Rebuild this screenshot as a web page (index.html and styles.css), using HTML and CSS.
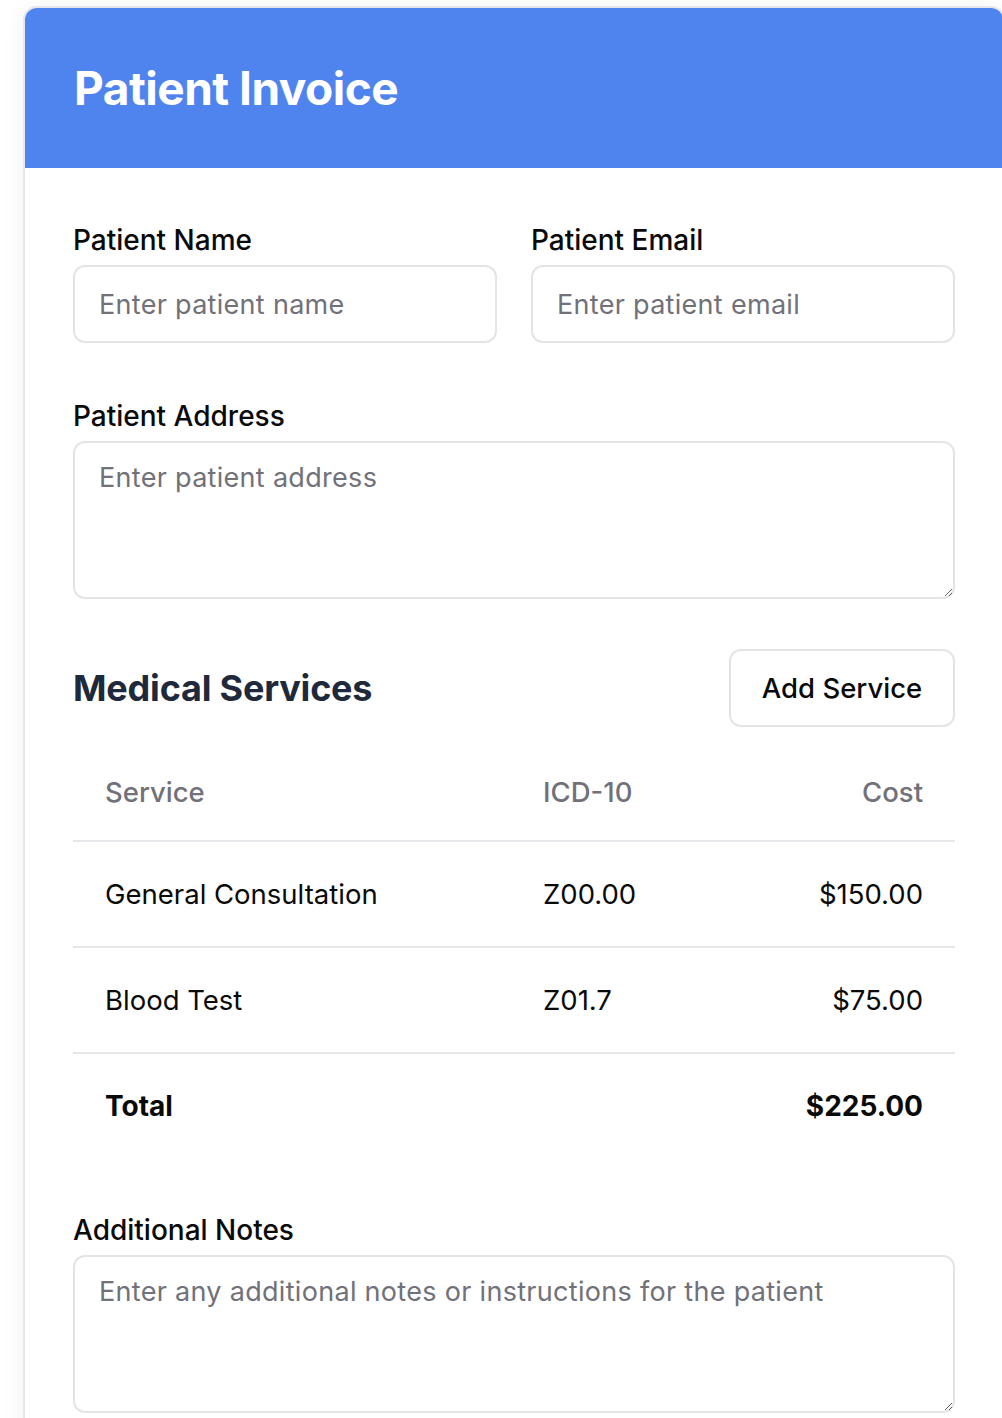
FILE: index.html
```html
<!DOCTYPE html>
<html lang="en">
<head>
<meta charset="utf-8">
<title>Patient Invoice</title>
<link rel="stylesheet" href="styles.css">
</head>
<body>
<div class="card">
  <div class="card-header">
    <h1 class="title">Patient Invoice</h1>
  </div>
  <div class="card-body">
    <div class="grid-2">
      <div class="field">
        <label class="label" for="pname">Patient Name</label>
        <input class="input" id="pname" type="text" placeholder="Enter patient name">
      </div>
      <div class="field">
        <label class="label" for="pemail">Patient Email</label>
        <input class="input" id="pemail" type="email" placeholder="Enter patient email">
      </div>
    </div>
    <div class="field field-address">
      <label class="label" for="paddr">Patient Address</label>
      <textarea class="textarea" id="paddr" placeholder="Enter patient address"></textarea>
    </div>

    <div class="services-head">
      <h2 class="section-title">Medical Services</h2>
      <button class="btn" type="button">Add Service</button>
    </div>

    <table class="table">
      <colgroup>
        <col class="col-service">
        <col class="col-icd">
        <col class="col-cost">
      </colgroup>
      <thead>
        <tr>
          <th class="th">Service</th>
          <th class="th">ICD-10</th>
          <th class="th right">Cost</th>
        </tr>
      </thead>
      <tbody>
        <tr class="row">
          <td class="td">General Consultation</td>
          <td class="td">Z00.00</td>
          <td class="td right">$150.00</td>
        </tr>
        <tr class="row">
          <td class="td">Blood Test</td>
          <td class="td">Z01.7</td>
          <td class="td right">$75.00</td>
        </tr>
        <tr class="row total">
          <td class="td strong">Total</td>
          <td class="td"></td>
          <td class="td right strong">$225.00</td>
        </tr>
      </tbody>
    </table>

    <div class="field field-notes">
      <label class="label" for="notes">Additional Notes</label>
      <textarea class="textarea" id="notes" placeholder="Enter any additional notes or instructions for the patient"></textarea>
    </div>
  </div>
</div>
</body>
</html>
```
FILE: styles.css
```css
html, body {
  margin: 0;
  padding: 0;
  background: #ffffff;
  overflow: hidden;
}
body {
  font-family: Inter, "Noto Sans", "Liberation Sans", sans-serif;
  color: #0a0a0a;
}
.card {
  box-sizing: border-box;
  width: 982px;
  margin: 6px 0 0 23px;
  border: 2px solid #e5e7eb;
  border-radius: 14px;
  overflow: hidden;
  background: #fff;
  box-shadow: 0 4px 24px rgba(0, 0, 0, 0.06);
}
.card-header {
  background: #4f83ee;
  padding: 48px 48px 48px 49px;
}
.title {
  margin: 0;
  color: #fff;
  font-size: 46px;
  line-height: 64px;
  font-weight: 700;
  letter-spacing: -0.5px;
}
.card-body {
  padding: 52px 48px 40px 48px;
}
.grid-2 {
  display: grid;
  grid-template-columns: 1fr 1fr;
  column-gap: 34px;
}
.field {
  display: flex;
  flex-direction: column;
}
.field-address {
  margin-top: 53px;
}
.label {
  display: block;
  font-size: 28px;
  line-height: 40px;
  font-weight: 500;
  margin-bottom: 5px;
  color: #0a0a0a;
}
.input, .textarea {
  box-sizing: border-box;
  width: 100%;
  border: 2px solid #e4e4e7;
  border-radius: 12px;
  background: #fff;
  font-family: inherit;
  font-size: 27px;
  letter-spacing: 0.3px;
  color: #0a0a0a;
  padding: 0 24px;
  outline: none;
  margin: 0;
}
.input {
  height: 78px;
}
.textarea {
  height: 158px;
  padding-top: 15px;
  line-height: 40px;
  resize: vertical;
  display: block;
}
.input::placeholder, .textarea::placeholder {
  color: #71717a;
}
.services-head {
  margin-top: 50px;
  display: flex;
  align-items: center;
  justify-content: space-between;
}
.section-title {
  margin: 0;
  font-size: 36px;
  line-height: 48px;
  font-weight: 700;
  color: #1e293b;
  letter-spacing: -0.2px;
}
.btn {
  box-sizing: border-box;
  height: 78px;
  width: 226px;
  padding: 0;
  border: 2px solid #e4e4e7;
  border-radius: 12px;
  background: #fff;
  font-family: inherit;
  font-size: 27.5px;
  font-weight: 500;
  color: #0a0a0a;
}
.table {
  margin-top: 17px;
  width: 100%;
  border-collapse: collapse;
  font-size: 27.5px;
}
.col-service { width: 438px; }
.col-icd { width: 222px; }
.th {
  height: 96px;
  padding: 0 32px;
  text-align: left;
  font-weight: 500;
  color: #71717a;
  border-bottom: 2px solid #e5e7eb;
  vertical-align: middle;
}
.td {
  padding: 32px;
  line-height: 40px;
  color: #0a0a0a;
  border-bottom: 2px solid #e5e7eb;
}
.total .td {
  border-bottom: none;
}
.right {
  text-align: right;
}
.strong {
  font-weight: 700;
  font-size: 28px;
}
.field-notes {
  margin-top: 52px;
}
```
